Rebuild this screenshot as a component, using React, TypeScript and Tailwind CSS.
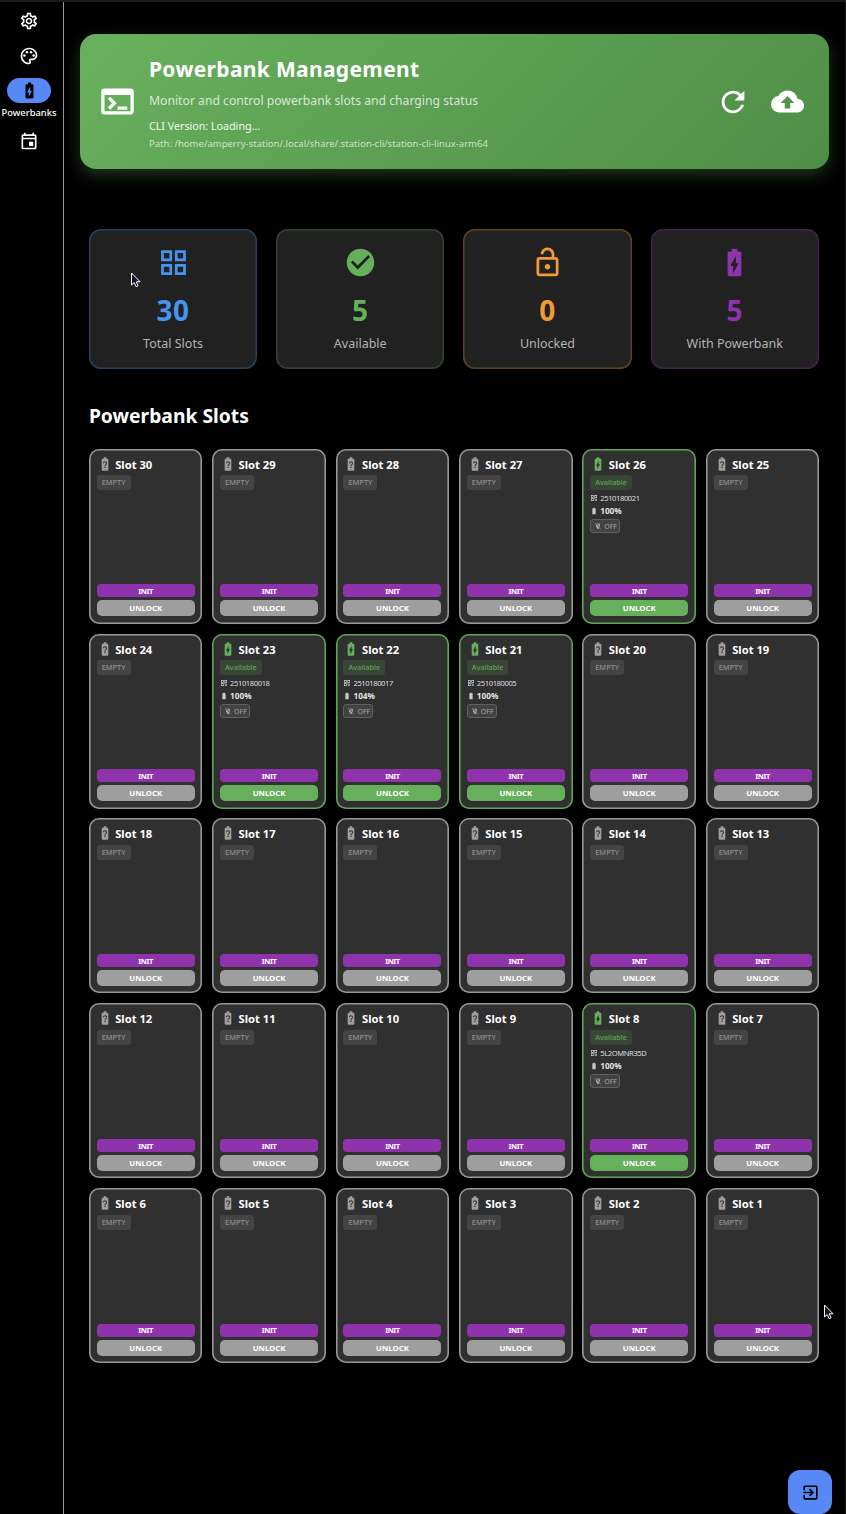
import React from "react";
import {
  MdBackup,
  MdBatteryChargingFull,
  MdBatteryFull,
  MdBatteryUnknown,
  MdCheckCircle,
  MdExitToApp,
  MdGridView,
  MdOutlineEvent,
  MdOutlineLockOpen,
  MdOutlinePalette,
  MdOutlineSettings,
  MdPowerOff,
  MdQrCode,
  MdRefresh,
  MdTerminal,
} from "react-icons/md";

type Powerbank = { id: string; charge: string };

const powerbanks: Record<number, Powerbank> = {
  26: { id: "2510180021", charge: "100%" },
  23: { id: "2510180018", charge: "100%" },
  22: { id: "2510180017", charge: "104%" },
  21: { id: "2510180005", charge: "100%" },
  8: { id: "5L2OMNR35D", charge: "100%" },
};

const slots = Array.from({ length: 30 }, (_, i) => 30 - i);

const stats = [
  { label: "Total Slots", value: "30", Icon: MdGridView, color: "text-[#4793ee]", ring: "shadow-[inset_0_0_0_1.5px_#27415f]" },
  { label: "Available", value: "5", Icon: MdCheckCircle, color: "text-[#66b05b]", ring: "shadow-[inset_0_0_0_1.5px_#2f482d]" },
  { label: "Unlocked", value: "0", Icon: MdOutlineLockOpen, color: "text-[#f29b35]", ring: "shadow-[inset_0_0_0_1.5px_#60431c]" },
  { label: "With Powerbank", value: "5", Icon: MdBatteryChargingFull, color: "text-[#8f33ac]", ring: "shadow-[inset_0_0_0_1.5px_#43234c]" },
];

function Sidebar() {
  return (
    <nav className="flex w-[64px] shrink-0 flex-col border-r border-[#969696] pt-[9px] text-white">
      <div className="flex w-[58px] flex-col items-center">
        <MdOutlineSettings className="size-5" />
        <MdOutlinePalette className="mt-[15px] size-5" />
        <div className="mt-3 flex h-[25px] w-11 items-center justify-center rounded-full bg-[#5689f6] text-black">
          <MdBatteryChargingFull className="size-[19px]" />
        </div>
        <span className="mt-[3px] text-[9.4px] leading-[14px] font-medium">Powerbanks</span>
        <MdOutlineEvent className="mt-[10.5px] size-5" />
      </div>
    </nav>
  );
}

function Header() {
  return (
    <header className="flex h-[135px] items-center rounded-2xl bg-[linear-gradient(135deg,#69b05e_0%,#4f8e47_100%)] pr-[25px] pl-[18px] text-white shadow-[0_6px_16px_rgba(102,176,91,0.3)]">
      <MdTerminal className="size-[39px] shrink-0" />
      <div className="ml-3 flex-1 pt-[2px] whitespace-nowrap">
        <h1 className="text-[21px] leading-[30px] font-bold tracking-[0.33px]">Powerbank Management</h1>
        <p className="mt-[8px] text-[12.2px] leading-[18px] text-white/75">Monitor and control powerbank slots and charging status</p>
        <p className="mt-[8px] text-[10.7px] leading-4 text-white/90">CLI Version: Loading...</p>
        <p className="mt-[3px] text-[9.52px] leading-[14px] text-white/70">Path: /home/amperry-station/.local/share/.station-cli/station-cli-linux-arm64</p>
      </div>
      <MdRefresh className="size-[34px]" />
      <MdBackup className="ml-[21px] size-[33px]" />
    </header>
  );
}

function SlotCard({ n }: { n: number }) {
  const pb = powerbanks[n];
  return (
    <article
      className={
        "flex h-[175px] flex-col rounded-[10px] bg-[#303030] px-[7.8px] pt-[6px] pb-[7.6px] " +
        (pb ? "shadow-[inset_0_0_0_1.6px_#5ea654]" : "shadow-[inset_0_0_0_1.6px_#979797]")
      }
    >
      <div className="flex h-[19px] items-center">
        {pb ? <MdBatteryChargingFull className="-mt-px size-4 text-[#66b05b]" /> : <MdBatteryUnknown className="-mt-px size-4 text-[#9e9e9e]" />}
        <h3 className="ml-[2.5px] text-[11.2px] leading-[19px] font-bold text-white">Slot {n}</h3>
      </div>
      <div className="mt-[1.4px] flex">
        {pb ? (
          <span className="flex h-[15px] items-center rounded-[3px] bg-[#394637] px-[5px] text-[7.3px] font-medium text-[#5fa455]">Available</span>
        ) : (
          <span className="flex h-[15px] items-center rounded-[3px] bg-[#444444] px-[5px] text-[7.4px] font-medium text-[#8f8f8f]">EMPTY</span>
        )}
      </div>
      {pb && (
        <>
          <div className="mt-[2px] flex h-3 items-center">
            <MdQrCode className="size-2 text-[#d0d0d0]" />
            <span className="ml-[2px] text-[7.6px] leading-3 tracking-[-0.4px] text-[#dedede]">{pb.id}</span>
          </div>
          <div className="mt-[1.5px] flex h-3 items-center">
            <MdBatteryFull className="size-2 text-[#c8c8c8]" />
            <span className="ml-[2px] text-[8.2px] leading-3 font-bold text-[#e4e4e4]">{pb.charge}</span>
          </div>
          <div className="mt-[2px] flex">
            <span className="flex h-[14px] w-[30px] items-center gap-[2px] rounded-[3px] border border-[#606060] bg-[#424242] pl-[3px] text-[7px] leading-none text-[#a8a8a8]">
              <MdPowerOff className="size-2" />
              <span className="pt-px">OFF</span>
            </span>
          </div>
        </>
      )}
      <div className="mt-auto flex flex-col gap-[3px] text-center text-white">
        <button className="h-[12.6px] rounded-[4px] bg-[#8f33ac] text-[7.5px] leading-3 font-bold tracking-[-0.4px]">INIT</button>
        <button className={"h-4 rounded-[5px] text-[7.8px] leading-4 font-bold " + (pb ? "bg-[#66b05b]" : "bg-[#9e9e9e]")}>UNLOCK</button>
      </div>
    </article>
  );
}

function Pointer({ className }: { className: string }) {
  return (
    <svg viewBox="0 0 11 16" className={"absolute h-4 w-[11px] " + className}>
      <path d="M1.5 1v12l2.7-2.4 1.9 4.1 2-.9-1.8-4h3.8z" fill="#16162a" stroke="#fff" strokeWidth="1" />
    </svg>
  );
}

export default function App() {
  return (
    <div className="relative flex h-[1514px] w-[846px] flex-col overflow-hidden border-r border-[#1c1c1c] bg-black font-['Noto_Sans',sans-serif]">
      <div className="h-[2px] shrink-0 bg-[#1b1b1b]" />
      <div className="flex flex-1">
        <Sidebar />
        <main className="w-[765px] pt-8 pl-4">
          <Header />
          <div className="pr-[9.55px] pl-[8.9px]">
            <section className="mt-[60px] grid grid-cols-4 gap-[19px] pr-[0.6px]">
              {stats.map(({ label, value, Icon, color, ring }) => (
                <div key={label} className={"flex h-[140px] flex-col items-center rounded-xl bg-[#212121] pt-[17px] " + ring}>
                  <Icon className={"size-[33px] " + color} />
                  <span className={"mt-[13px] text-[28px] leading-9 font-bold tracking-[0.5px] " + color}>{value}</span>
                  <span className="mt-[7px] text-[12.5px] leading-[18px] text-[#b3b3b3]">{label}</span>
                </div>
              ))}
            </section>
            <h2 className="mt-[33px] text-[19.3px] leading-7 font-bold text-white">Powerbank Slots</h2>
            <section className="mt-[18.6px] grid grid-cols-6 gap-x-[9.8px] gap-y-[9.95px]">
              {slots.map((n) => (
                <SlotCard key={n} n={n} />
              ))}
            </section>
          </div>
        </main>
      </div>
      <button className="absolute top-[1470px] left-[788px] flex size-11 items-center justify-center rounded-xl bg-[#5689f6] text-black">
        <MdExitToApp className="size-[19px]" />
      </button>
      <Pointer className="top-[272px] left-[130px]" />
      <Pointer className="top-[1304px] left-[823px]" />
    </div>
  );
}
